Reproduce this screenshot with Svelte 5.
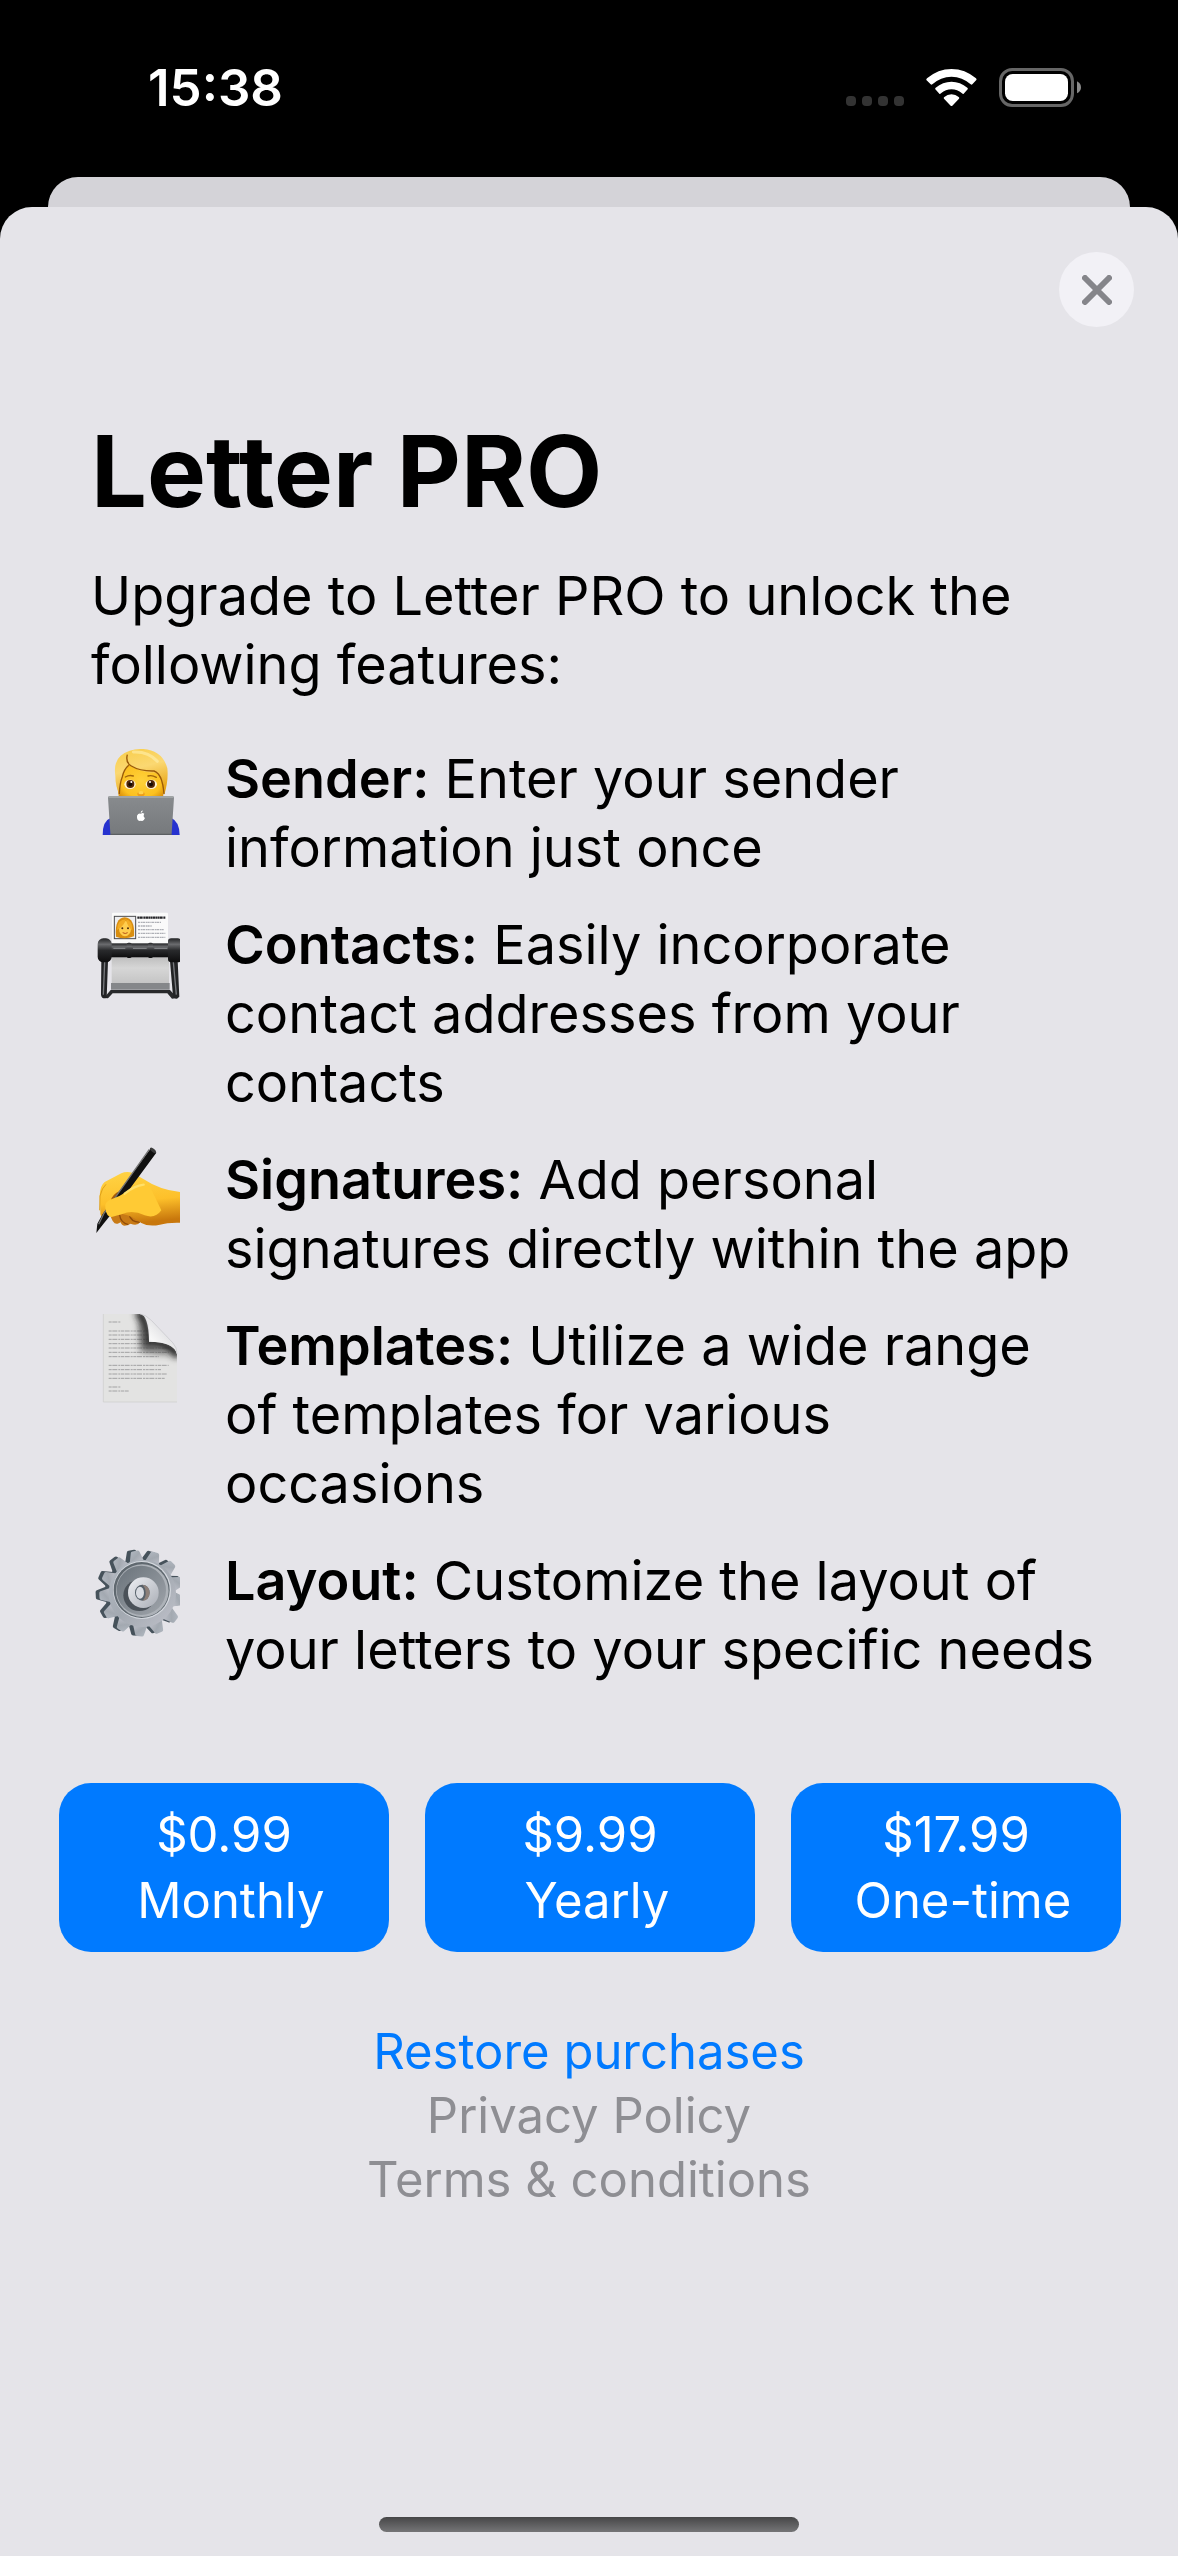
<script lang="ts">
  const features = [
    { icon: 'person', name: 'Sender:', text: 'Enter your sender information just once' },
    { icon: 'cards', name: 'Contacts:', text: 'Easily incorporate contact addresses from your contacts' },
    { icon: 'hand', name: 'Signatures:', text: 'Add personal signatures directly within the app' },
    { icon: 'page', name: 'Templates:', text: 'Utilize a wide range\nof templates for various occasions' },
    { icon: 'gear', name: 'Layout:', text: 'Customize the layout of your letters to your specific needs' },
  ];

  const plans = [
    { price: '$0.99', period: ' Monthly' },
    { price: '$9.99', period: ' Yearly' },
    { price: '$17.99', period: ' One-time' },
  ];

  const pageLines = [
    [26, 36], [53, 118], [65, 118], [78, 118], [91, 126], [104, 180], [117, 180], [130, 150],
    [156, 180], [169, 158], [182, 176], [195, 168], [221, 36], [233, 60],
  ];

  const teeth = Array.from({ length: 13 }, (_, i) => -10 + (i * 360) / 13);
</script>

<div class="screen">
  <header class="status">
    <time>15:38</time>
    <div class="indicators">
      <div class="dots"><i></i><i></i><i></i><i></i></div>
      <svg class="wifi" viewBox="0 0 153 111" aria-hidden="true">
        <path d="M1 33 Q0 31 3 28 Q36 0 76.500 0 Q117 0 150 28 Q153 31 151 33 L139 46 Q137 48 134 46 Q109 23 76.500 23 Q44 23 19 46 Q16 48 14 46 Z" />
        <path d="M28 61 Q26 59 29 56 Q50 38 76.500 38 Q103 38 124 56 Q127 59 125 61 L113 74 Q111 76 108 73 Q94 61 76.500 61 Q59 61 45 73 Q42 76 40 74 Z" />
        <path d="M54 89 Q52 87 55 84 Q64 76 76.500 76 Q89 76 98 84 Q101 87 99 89 L79 110 Q76.500 112 74 110 Z" />
      </svg>
      <svg class="battery" viewBox="0 0 246 117" aria-hidden="true">
        <rect x="4.500" y="4.500" width="216" height="108" rx="35" fill="none" stroke="#666" stroke-width="9" />
        <rect x="18" y="18" width="189" height="81" rx="23" fill="#fff" />
        <path d="M234 40 Q246 46 246 58 Q246 70 234 76 Z" fill="#8a8a8a" />
      </svg>
    </div>
  </header>

  <div class="behind"></div>

  <main class="sheet">
    <button class="close" aria-label="Close">
      <svg viewBox="0 0 30 30" aria-hidden="true"><path d="M3 3 L27 27 M27 3 L3 27" /></svg>
    </button>

    <section class="content">
      <h1>Letter PRO</h1>
      <p class="intro">Upgrade to Letter PRO to unlock the following features:</p>

      <ul>
        {#each features as f}
          <li>
            {#if f.icon === 'person'}
              <svg class="emoji" viewBox="42 48 258 270" aria-hidden="true">
                <defs>
                  <radialGradient id="face" cx="0.5" cy="0.55" r="0.6"><stop offset="0" stop-color="#ffd13b" /><stop offset="0.7" stop-color="#fcc120" /><stop offset="1" stop-color="#d98d0a" /></radialGradient>
                  <linearGradient id="hair" x1="0" y1="0" x2="0.3" y2="1"><stop offset="0" stop-color="#f8cd48" /><stop offset="0.5" stop-color="#fbd872" /><stop offset="1" stop-color="#e9a81b" /></linearGradient>
                  <linearGradient id="lid" x1="0" y1="0" x2="0" y2="1"><stop offset="0" stop-color="#888b8e" /><stop offset="1" stop-color="#76797c" /></linearGradient>
                </defs>
                <path d="M68 315 Q68 272 92 264 L274 264 Q298 274 299 315 Z" fill="#2632cf" />
                <path d="M114 120 Q110 165 117 205 L248 205 Q258 170 254 120 Q240 88 184 86 Q124 88 114 120 Z" fill="url(#face)" />
                <path d="M106 138 Q100 96 122 77 Q150 54 190 57 Q248 62 262 115 Q266 150 253 194 Q248 165 240 140 Q226 124 212 128 Q172 122 146 104 Q136 118 128 134 Q119 160 119 194 Q106 170 106 138 Z" fill="url(#hair)" />
                <path d="M142 74 Q136 98 154 108 Q180 124 222 123 Q236 128 243 146 M146 106 Q132 118 127 140 Q119 160 118 192 M252 192 Q250 162 241 140" fill="none" stroke="#9a5a08" stroke-width="4" />
                <path d="M160 66 Q206 64 232 94" fill="none" stroke="#fff0ae" stroke-width="9" opacity="0.6" stroke-linecap="round" />
                <path d="M136 141 Q148 134 160 138 M204 138 Q216 134 229 142" fill="none" stroke="#a2660b" stroke-width="4" stroke-linecap="round" />
                <ellipse cx="150" cy="163" rx="17" ry="14" fill="#fff3d4" /><ellipse cx="214" cy="163" rx="17" ry="14" fill="#fff3d4" />
                <circle cx="151" cy="162" r="12" fill="#54290a" /><circle cx="213" cy="162" r="12" fill="#54290a" />
                <circle cx="151" cy="163" r="6" fill="#170b03" /><circle cx="213" cy="163" r="6" fill="#170b03" />
                <circle cx="154" cy="156" r="3" fill="#fff" /><circle cx="210" cy="156" r="3" fill="#fff" />
                <ellipse cx="183" cy="192" rx="11" ry="7" fill="#ee9d18" /><ellipse cx="183" cy="188" rx="8" ry="5" fill="#ffd34a" />
                <path d="M84 203 Q84 198 89 198 L277 198 Q282 198 282 203 L275 310 Q275 315 270 315 L96 315 Q91 315 91 310 Z" fill="url(#lid)" />
                <path d="M86 201 L280 201" stroke="#a9acae" stroke-width="4" /><path d="M91 313 L275 313" stroke="#5b5f62" stroke-width="4" />
                <path d="M183 251 Q187 247 193 251 Q188 259 195 264 Q191 274 186 273 Q183 271 179 273 Q170 271 171 257 Q175 248 183 251 Z M182 249 Q182 243 188 241 Q189 247 182 249 Z" fill="#fff" />
              </svg>
            {:else if f.icon === 'cards'}
              <svg class="emoji" viewBox="42 42 258 270" aria-hidden="true">
                <defs>
                  <linearGradient id="roll" x1="0" y1="0" x2="0" y2="1"><stop offset="0" stop-color="#222325" /><stop offset="0.25" stop-color="#6a6b6e" /><stop offset="0.5" stop-color="#292a2c" /><stop offset="1" stop-color="#0c0c0d" /></linearGradient>
                  <linearGradient id="stack" x1="0" y1="0" x2="0" y2="1"><stop offset="0" stop-color="#bfbfbf" /><stop offset="0.4" stop-color="#d6d6d6" /><stop offset="1" stop-color="#c4c4c4" /></linearGradient>
                </defs>
                <rect x="96" y="44" width="168" height="100" rx="3" fill="#fafafa" />
                <rect x="103" y="55" width="64" height="67" fill="#eeeef0" stroke="#4c4c50" stroke-width="3" />
                <path d="M108 116 Q103 60 134 58 Q166 60 162 115 Q134 126 108 116 Z" fill="#d98e10" />
                <ellipse cx="135" cy="92" rx="18" ry="23" fill="#ffcd4e" />
                <path d="M111 96 Q112 64 138 64 Q133 84 111 96 Z M138 64 Q158 68 157 98 Q142 86 138 64 Z" fill="#f2ab24" />
                <circle cx="127" cy="91" r="3" fill="#4d2a08" /><circle cx="144" cy="91" r="3" fill="#4d2a08" /><path d="M128 104 Q136 109 143 104" fill="none" stroke="#b54f18" stroke-width="3" />
                <path d="M172 59 H256" stroke="#26262a" stroke-width="7" stroke-dasharray="5 1 8 1 4 1" />
                <path d="M174 73 H244 M174 84 H216 M174 95 H252 M174 106 H256 M174 118 H256" stroke="#aeb0b6" stroke-width="4" stroke-dasharray="7 2 4 1" />
                <rect x="95" y="178" width="172" height="80" fill="url(#stack)" />
                <path d="M93 255 H269 V275 H93 Z" fill="#85878a" />
                <path d="M72 300 L92 276 H270 L292 300 L276 302 L262 286 H98 L84 301 Z" fill="#28292b" />
                <path d="M64 188 L63 290 Q64 301 74 301 L80 300 L84 190 Z M270 190 L279 295 Q281 302 291 302 L298 296 L293 188 Z" fill="#222325" />
                <path d="M74 192 L70 290 M280 192 L289 290" stroke="#77797d" stroke-width="4" />
                <rect x="84" y="136" width="192" height="42" fill="url(#roll)" />
                <rect x="140" y="134" width="15" height="46" rx="5" fill="url(#roll)" /><rect x="204" y="134" width="15" height="46" rx="5" fill="url(#roll)" />
                <path d="M100 151 H136 M159 151 H200 M223 151 H262" stroke="#8d8f92" stroke-width="3" />
                <rect x="53" y="121" width="42" height="72" rx="17" fill="url(#roll)" /><rect x="264" y="121" width="39" height="72" rx="10" fill="url(#roll)" />
              </svg>
            {:else if f.icon === 'hand'}
              <svg class="emoji" viewBox="42 54 258 270" aria-hidden="true">
                <defs>
                  <linearGradient id="skin" x1="0" y1="0" x2="0.15" y2="1"><stop offset="0" stop-color="#ffd446" /><stop offset="0.6" stop-color="#fdc02a" /><stop offset="1" stop-color="#c8770c" /></linearGradient>
                </defs>
                <path d="M90 254 Q98 288 113 284 L122 280 Q126 294 142 289 L152 284 Q172 292 182 278 L196 264 L120 238 Z" fill="#c87a16" />
                <path d="M119 258 Q121 280 145 287 M148 258 Q152 278 179 280" fill="none" stroke="#8f4b08" stroke-width="4" />
                <path d="M61 250 L59 200 Q60 170 74 159 L124 133 Q138 126 157 131 L190 150 Q240 183 300 189 L300 281 Q262 280 240 287 Q206 294 184 282 Q155 260 128 255 L70 262 Q60 264 61 250 Z" fill="url(#skin)" />
                <path d="M92 216 Q96 196 120 186 L158 166 L128 208 Z" fill="#a85c0b" />
                <path d="M213 57 L229 71 L91 259 L67 289 L49 312 L52 284 L68 255 Z" fill="#101010" />
                <path d="M208 61 L72 253 L56 286" fill="none" stroke="#737373" stroke-width="4" />
                <ellipse cx="219" cy="64" rx="11" ry="5" fill="#3c3c3c" transform="rotate(40 219 64)" />
                <path d="M76 238 Q72 218 94 211 Q119 203 137 190 Q180 158 211 175 L244 244 Q226 270 194 259 Q158 242 127 255 L95 264 Q79 264 76 238 Z" fill="#ffca34" />
                <path d="M134 194 Q164 170 191 167" fill="none" stroke="#ffe06a" stroke-width="7" stroke-linecap="round" />
                <path d="M59 244 L60 201 Q66 176 78 166" fill="none" stroke="#dfa01a" stroke-width="3" />
              </svg>
            {:else if f.icon === 'page'}
              <svg class="emoji" viewBox="42 42 258 270" aria-hidden="true">
                <defs>
                  <linearGradient id="curl" x1="0.1" y1="0.9" x2="0.7" y2="0.3"><stop offset="0" stop-color="#d2d2d3" /><stop offset="0.4" stop-color="#f8f8f8" /><stop offset="1" stop-color="#dcdcdf" /></linearGradient>
                  <filter id="soft" x="-30%" y="-30%" width="160%" height="160%"><feGaussianBlur stdDeviation="9" /></filter>
                  <clipPath id="leaf"><path d="M69 45 H180 Q206 48 207 128 Q280 128 291 164 V309 H69 Z" /></clipPath>
                </defs>
                <path d="M69 45 H180 Q206 48 207 128 Q280 128 291 164 V309 H69 Z" fill="#e3e3e2" />
                <g clip-path="url(#leaf)">
                  <g transform="translate(86 43)">
                    {#each pageLines as [y, w]}
                      <path d="M0 {y} h{w}" stroke="#a2a2a3" stroke-width="3" stroke-dasharray="9 2 15 3 6 2" />
                    {/each}
                  </g>
                  <path d="M172 38 Q200 60 204 130 Q270 132 296 172" fill="none" stroke="#222" stroke-width="26" filter="url(#soft)" />
                  <path d="M175 60 L180 160 L275 170 L210 128 Z" fill="#444" opacity="0.6" filter="url(#soft)" />
                </g>
                <path d="M180 45 Q196 46 214 64 L279 132 Q291 145 291 165 Q281 127 207 128 Q214 47 180 45 Z" fill="url(#curl)" />
                <path d="M180 45 Q196 46 214 64 L279 132 Q291 145 291 165" fill="none" stroke="#c4c4c8" stroke-width="2" />
                <path d="M70 45 V309 H291" fill="none" stroke="#cbcbcb" stroke-width="2" />
              </svg>
            {:else}
              <svg class="emoji" viewBox="42 42 258 270" aria-hidden="true">
                <defs>
                  <linearGradient id="steel" x1="0" y1="0" x2="1" y2="1"><stop offset="0" stop-color="#b3bac3" /><stop offset="0.5" stop-color="#a3a9b1" /><stop offset="1" stop-color="#bfc1ca" /></linearGradient>
                  <linearGradient id="dish" x1="0" y1="0" x2="1" y2="1"><stop offset="0" stop-color="#69727a" /><stop offset="1" stop-color="#a0a5ab" /></linearGradient>
                  <linearGradient id="hub" x1="0" y1="0" x2="1" y2="1"><stop offset="0" stop-color="#eef0f4" /><stop offset="1" stop-color="#a9adb5" /></linearGradient>
                </defs>
                <g fill="#46525b" transform="translate(-11 -2)">
                  {#each teeth as a}
                    <path d="M163 82 L173 53 Q174 49 179 49 L195 49 Q200 49 201 53 L211 82 Z" transform="rotate({a} 187 178)" />
                  {/each}
                  <circle cx="187" cy="178" r="102" />
                </g>
                <g fill="url(#steel)">
                  {#each teeth as a}
                    <path d="M165 84 L174 53 Q175 49 180 49 L194 49 Q199 49 200 53 L209 84 Z" transform="rotate({a} 187 178)" />
                  {/each}
                  <circle cx="187" cy="178" r="101" />
                </g>
                <circle cx="186" cy="168" r="87" fill="#d5d9df" />
                <circle cx="185" cy="168" r="84" fill="#5f686f" />
                <circle cx="187" cy="170" r="79" fill="#adb2b8" />
                <circle cx="184" cy="169" r="74" fill="url(#dish)" />
                <ellipse cx="178" cy="184" rx="48" ry="47" fill="#4b5259" />
                <circle cx="190" cy="176" r="46" fill="url(#hub)" />
                <ellipse cx="187" cy="176" rx="22" ry="24" fill="#56616a" />
                <path d="M187 152 Q208 153 209 176 Q208 199 187 200 Q198 191 197 176 Q197 161 187 152 Z" fill="#8c7f78" />
                <ellipse cx="180" cy="176" rx="12" ry="18" fill="#d9dce2" />
              </svg>
            {/if}
            <p><strong>{f.name}</strong> {f.text}</p>
          </li>
        {/each}
      </ul>
    </section>

    <div class="plans">
      {#each plans as p}
        <button><span>{p.price}</span><span>{p.period}</span></button>
      {/each}
    </div>

    <nav>
      <a class="restore" href="#restore">Restore purchases</a>
      <a href="#privacy">Privacy Policy</a>
      <a href="#terms">Terms &amp; conditions</a>
    </nav>

    <div class="home"></div>
  </main>
</div>

<style>
  :global(body) {
    margin: 0;
    background: #000;
  }

  .screen {
    display: flex;
    flex-direction: column;
    min-height: 100vh;
    font-family: Inter, Roboto, sans-serif;
    color: #000;
  }

  h1, p, ul {
    margin: 0;
    padding: 0;
  }

  button {
    border: 0;
    padding: 0;
    font: inherit;
    cursor: pointer;
  }

  .status {
    display: flex;
    align-items: center;
    justify-content: space-between;
    box-sizing: border-box;
    height: 177px;
    padding: 0 97px 2px 148px;
    color: #fff;
  }

  time {
    font-size: 51px;
    line-height: 60px;
    font-weight: 600;
  }

  .indicators {
    display: flex;
    align-items: center;
    gap: 22px;
  }

  .dots {
    display: flex;
    gap: 6px;
    padding-top: 27px;
  }

  .dots i {
    width: 10px;
    height: 10px;
    border-radius: 4px;
    background: #333;
  }

  .wifi {
    width: 51px;
    height: 37px;
    fill: #fff;
  }

  .battery {
    width: 82px;
    height: 39px;
  }

  .behind {
    height: 30px;
    margin: 0 48px;
    border-radius: 30px 30px 0 0;
    background: #d4d3d8;
  }

  .sheet {
    flex: 1;
    display: flex;
    flex-direction: column;
    border-radius: 32px 32px 0 0;
    background: #e5e4e9;
  }

  .close {
    display: grid;
    place-items: center;
    align-self: flex-end;
    width: 75px;
    height: 75px;
    margin: 45px 44px 0 0;
    border-radius: 50%;
    background: #f2f1f6;
  }

  .close svg {
    width: 30px;
    height: 30px;
    fill: none;
    stroke: #85858a;
    stroke-width: 6;
    stroke-linecap: round;
  }

  .content {
    padding: 83px 76px 0 91px;
    font-size: 54px;
    line-height: 69px;
  }

  h1 {
    font-size: 99px;
    line-height: 122px;
    font-weight: 700;
  }

  .intro {
    padding-top: 29px;
  }

  ul {
    display: flex;
    flex-direction: column;
    gap: 28px;
    padding: 45px 0 0 3px;
    list-style: none;
  }

  li {
    display: flex;
    align-items: flex-start;
    gap: 45px;
  }

  li p {
    flex: 1;
    white-space: pre-line;
  }

  strong {
    font-weight: 600;
  }

  .emoji {
    flex: none;
    width: 86px;
    height: 90px;
    padding-top: 2px;
  }

  .plans {
    display: grid;
    grid-template-columns: repeat(3, 1fr);
    gap: 36px;
    padding: 99px 57px 0 59px;
  }

  .plans button {
    display: flex;
    flex-direction: column;
    align-items: center;
    padding: 19px 0 18px;
    border-radius: 32px;
    background: #007aff;
    color: #fff;
    font-size: 49px;
    line-height: 66px;
  }

  .plans span {
    white-space: pre;
  }

  nav {
    display: flex;
    flex-direction: column;
    align-items: center;
    padding-top: 68px;
    font-size: 49px;
    line-height: 64px;
  }

  nav a {
    color: #8e8e93;
    text-decoration: none;
  }

  nav .restore {
    color: #007aff;
  }

  .home {
    width: 420px;
    max-width: 80%;
    height: 15px;
    margin: auto auto 24px;
    border-radius: 8px;
    background: linear-gradient(#464647, #757577);
  }
</style>
